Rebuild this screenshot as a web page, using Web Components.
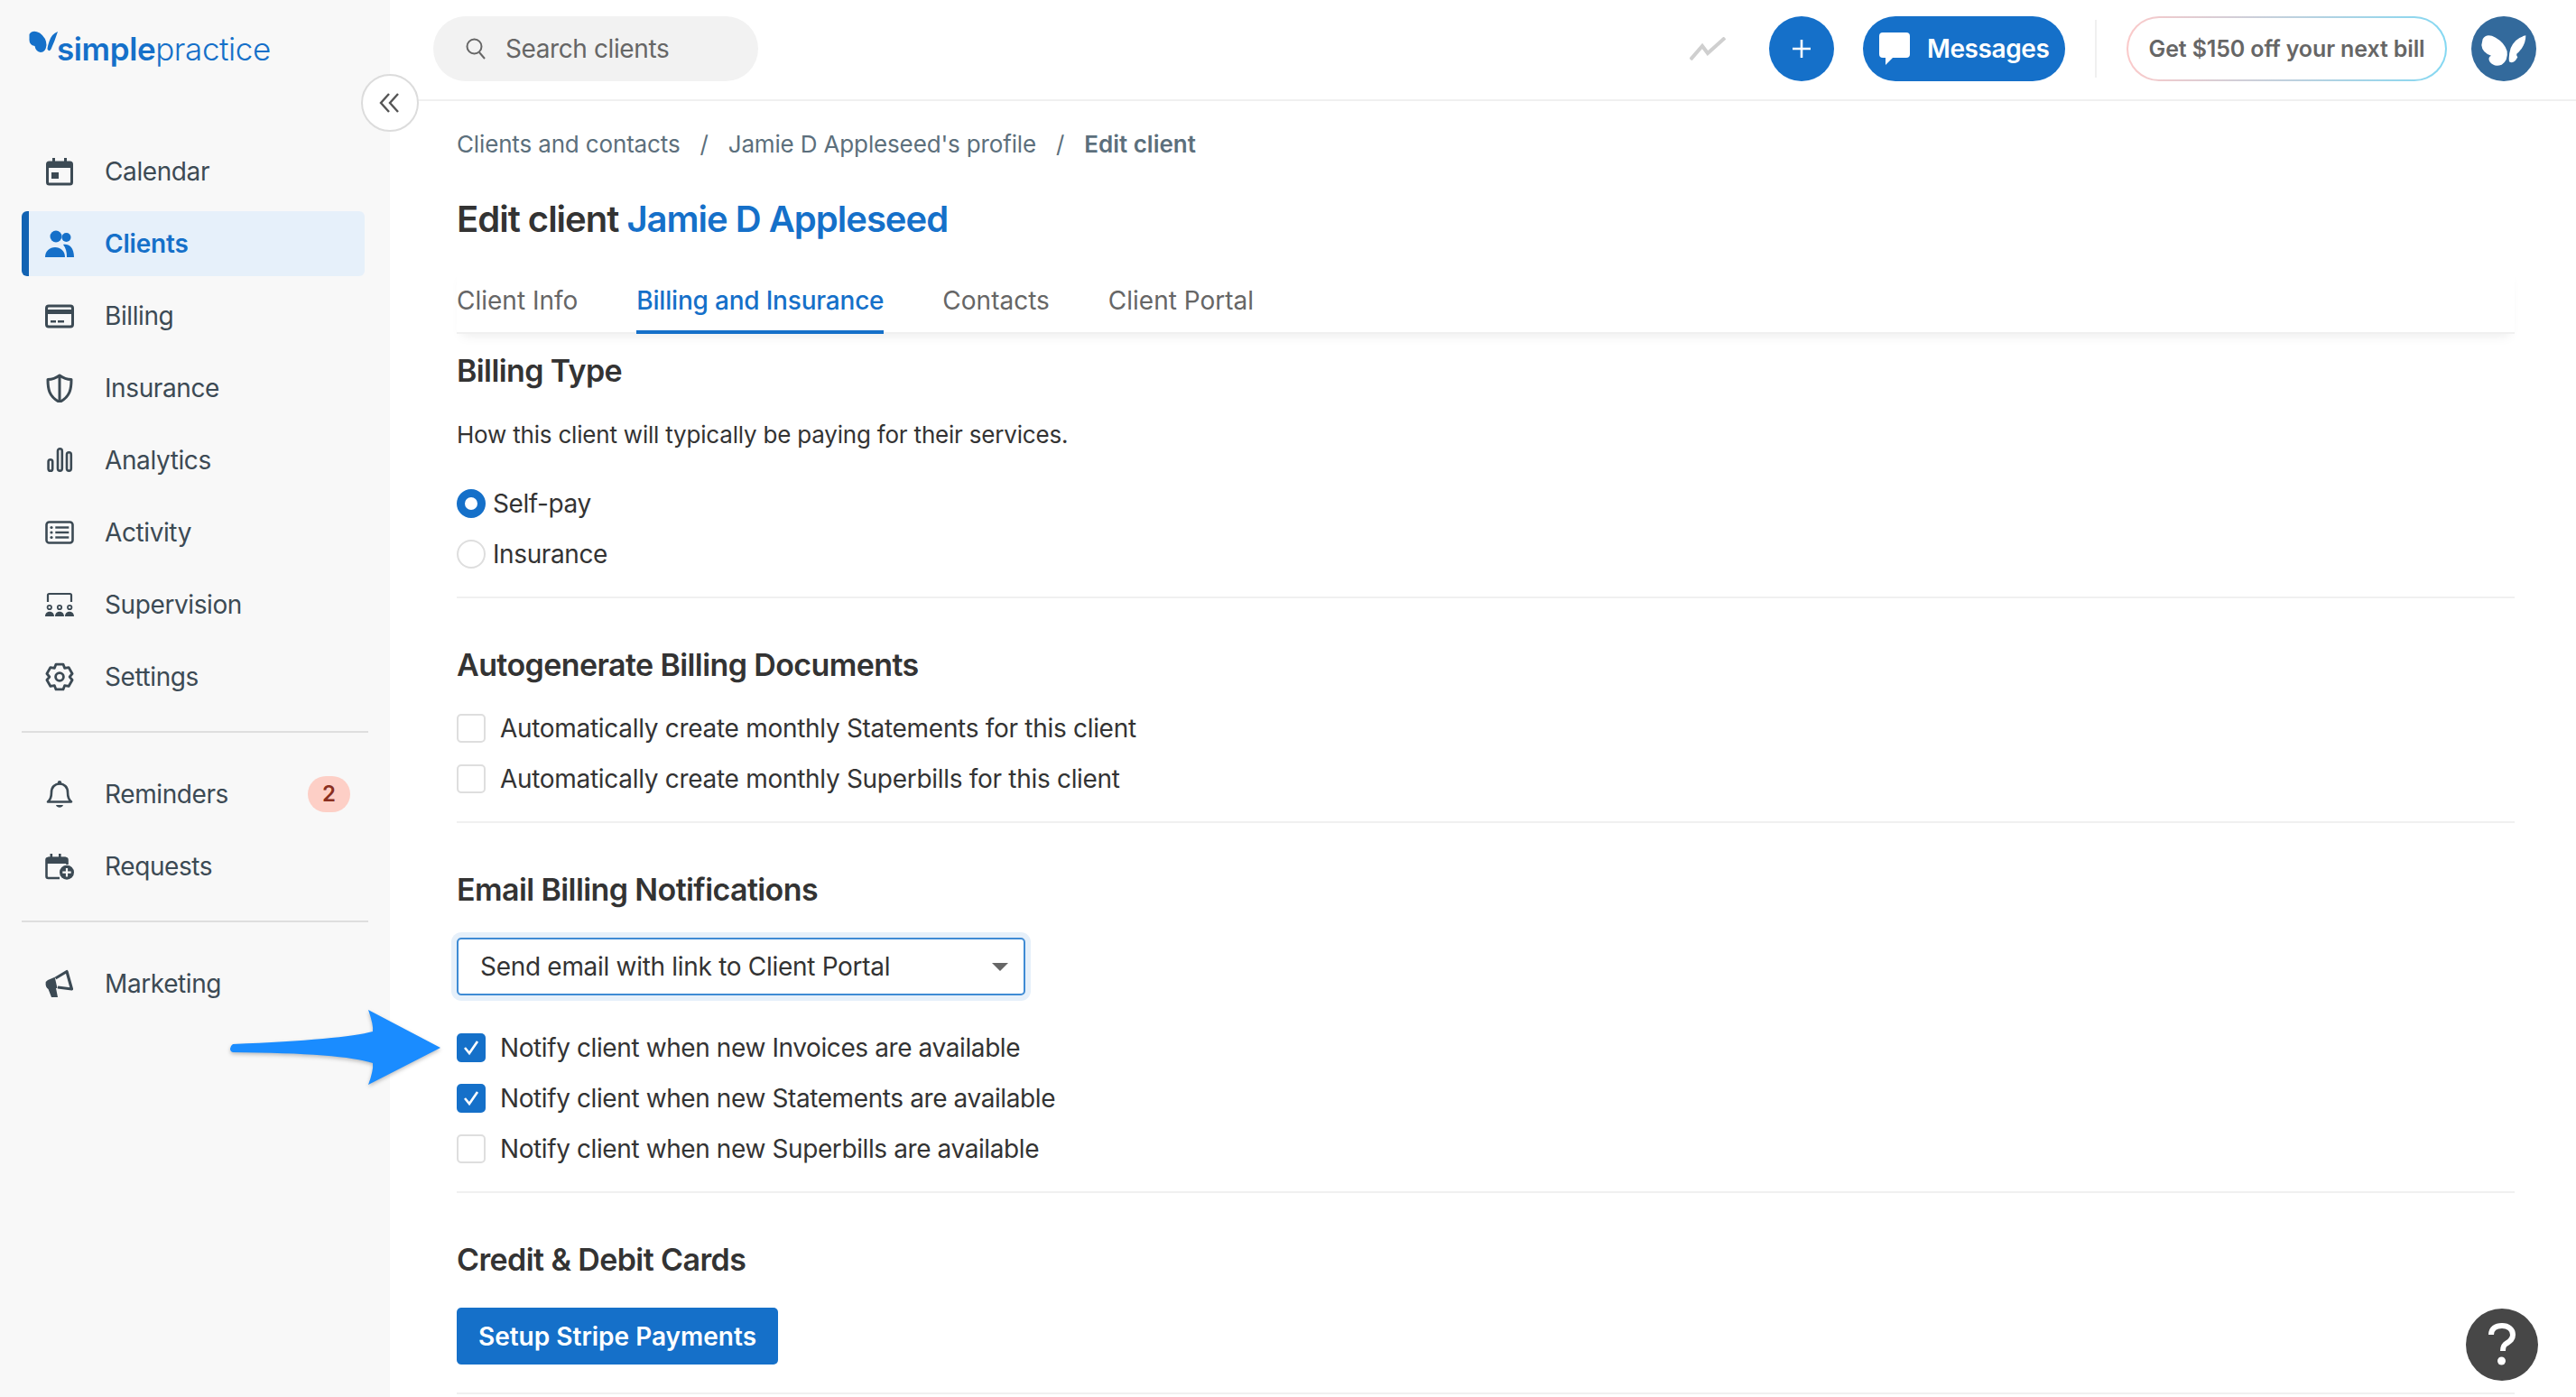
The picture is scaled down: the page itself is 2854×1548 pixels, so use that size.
<!DOCTYPE html>
<html lang="en">
<head>
<meta charset="utf-8">
<title>Edit client</title>
<style>
    html, body { margin: 0; height: 100%; overflow: hidden; background: #fff; }
    body { font-family: Inter, "Liberation Sans", sans-serif; color: #333; font-size: 28px; letter-spacing: -0.4px; }
    .lead { margin-top: 42px; }
    .desc { margin-top: 31px; line-height: 36px; font-size: 26px; letter-spacing: -0.2px; }
</style>
</head>
<body>
<sp-app>
    <sp-sidebar slot="sidebar">
        <sp-nav-item icon="calendar">Calendar</sp-nav-item>
        <sp-nav-item icon="clients" active>Clients</sp-nav-item>
        <sp-nav-item icon="billing">Billing</sp-nav-item>
        <sp-nav-item icon="insurance">Insurance</sp-nav-item>
        <sp-nav-item icon="analytics">Analytics</sp-nav-item>
        <sp-nav-item icon="activity">Activity</sp-nav-item>
        <sp-nav-item icon="supervision">Supervision</sp-nav-item>
        <sp-nav-item icon="settings">Settings</sp-nav-item>
        <sp-nav-rule></sp-nav-rule>
        <sp-nav-item icon="bell" badge="2">Reminders</sp-nav-item>
        <sp-nav-item icon="requests">Requests</sp-nav-item>
        <sp-nav-rule></sp-nav-rule>
        <sp-nav-item icon="marketing">Marketing</sp-nav-item>
    </sp-sidebar>
    <sp-topbar slot="topbar"></sp-topbar>

    <sp-breadcrumb>
        <a>Clients and contacts</a>
        <a>Jamie D Appleseed's profile</a>
        <a>Edit client</a>
    </sp-breadcrumb>
    <sp-title name="Jamie D Appleseed">Edit client</sp-title>
    <sp-tabs>
        <a>Client Info</a>
        <a active>Billing and Insurance</a>
        <a>Contacts</a>
        <a>Client Portal</a>
    </sp-tabs>

    <sp-section heading="Billing Type" first>
        <div class="desc">How this client will typically be paying for their services.</div>
        <sp-stack class="lead">
            <sp-radio checked>Self-pay</sp-radio>
            <sp-radio>Insurance</sp-radio>
        </sp-stack>
    </sp-section>

    <sp-section heading="Autogenerate Billing Documents">
        <sp-stack style="margin-top:32px; letter-spacing:-0.3px">
            <sp-check>Automatically create monthly Statements for this client</sp-check>
            <sp-check>Automatically create monthly Superbills for this client</sp-check>
        </sp-stack>
    </sp-section>

    <sp-section heading="Email Billing Notifications">
        <sp-select style="margin-top:31px; letter-spacing:-0.3px">Send email with link to Client Portal</sp-select>
        <sp-stack class="lead">
            <sp-check checked>Notify client when new Invoices are available</sp-check>
            <sp-check checked>Notify client when new Statements are available</sp-check>
            <sp-check>Notify client when new Superbills are available</sp-check>
        </sp-stack>
    </sp-section>

    <sp-section heading="Credit &amp; Debit Cards">
        <sp-button style="margin-top:31px">Setup Stripe Payments</sp-button>
    </sp-section>

    <sp-arrow slot="overlay"></sp-arrow>
    <sp-help slot="overlay"></sp-help>
</sp-app>

<script>
// six tooth cog outline, top tooth pointing up
function gearPath() {
    const pt = (deg, r) => {
        const a = deg * Math.PI / 180;
        return (16 + r * Math.cos(a)).toFixed(2) + ' ' + (16 + r * Math.sin(a)).toFixed(2);
    };
    let d = '';
    for (let i = 0; i < 6; i++) {
        const a = -90 + i * 60;
        d += (i ? 'L' : 'M') + pt(a - 16, 14.5) + 'L' + pt(a + 16, 14.5) + 'L' + pt(a + 30, 11.2);
    }
    return d + 'Z';
}

// nav icons, all drawn on a 32x32 box
const ICONS = {
    calendar: `<rect x="2.5" y="6" width="27" height="24" rx="2" fill="none" stroke="currentColor" stroke-width="3"/>
        <rect x="2.5" y="6" width="27" height="6" fill="currentColor"/>
        <rect x="8" y="1" width="3" height="6" fill="currentColor"/><rect x="21" y="1" width="3" height="6" fill="currentColor"/>
        <rect x="7" y="17" width="8" height="7" fill="currentColor"/>`,
    clients: `<circle cx="12" cy="8" r="6.5" fill="currentColor"/><circle cx="23.5" cy="9" r="5" fill="currentColor"/>
        <path d="M0 31c0-7 5-11 11-11s11 4 11 11z" fill="currentColor"/>
        <path d="M20 17c6-1 12 3 12 14h-8c0-6-1-10-4-14z" fill="currentColor"/>`,
    billing: `<rect x="1.5" y="5" width="29" height="23" rx="2.5" fill="none" stroke="currentColor" stroke-width="3"/>
        <rect x="2" y="9" width="28" height="5" fill="currentColor"/>
        <rect x="6" y="21" width="6" height="2.5" fill="currentColor"/><rect x="14" y="21" width="7" height="2.5" fill="currentColor"/>`,
    insurance: `<path d="M16 2C12 5 8 6.5 3 6.5c0 10 1 19 13 25 12-6 13-15 13-25C24 6.5 20 5 16 2z" fill="none" stroke="currentColor" stroke-width="3" stroke-linejoin="round"/>
        <rect x="14.5" y="3" width="3" height="27" fill="currentColor"/>`,
    analytics: `<g fill="none" stroke="currentColor" stroke-width="2.6"><rect x="3.6" y="15.3" width="4.6" height="12.4" rx="2.3"/>
        <rect x="14" y="3.3" width="4.8" height="24.4" rx="2.4"/>
        <rect x="24" y="7.3" width="4.8" height="20.4" rx="2.4"/></g>`,
    activity: `<rect x="1.5" y="4.5" width="29" height="23" rx="3" fill="none" stroke="currentColor" stroke-width="2.6"/>
        <g fill="currentColor"><circle cx="7" cy="10.5" r="1.6"/><circle cx="7" cy="16" r="1.6"/><circle cx="7" cy="21.5" r="1.6"/>
        <rect x="11.3" y="9.3" width="15" height="2.4"/><rect x="11.3" y="14.8" width="15" height="2.4"/><rect x="11.3" y="20.3" width="15" height="2.4"/></g>`,
    supervision: `<path d="M3 13V5.5Q3 4 4.5 4h23Q29 4 29 5.5V13" fill="none" stroke="currentColor" stroke-width="2.2"/>
        <g fill="none" stroke="currentColor" stroke-width="1.8"><circle cx="4.8" cy="19" r="2.2"/><circle cx="16" cy="19" r="2.2"/><circle cx="27.2" cy="19" r="2.2"/></g>
        <path d="M0 29c0-7 10-7 10 0zM11 29c0-7 10-7 10 0zM22 29c0-7 10-7 10 0z" fill="currentColor"/>`,
    settings: `<path d="${gearPath()}" fill="none" stroke="currentColor" stroke-width="2.8" stroke-linejoin="round"/>
        <circle cx="16" cy="16" r="4.4" fill="none" stroke="currentColor" stroke-width="2.8"/>`,
    bell: `<path d="M3 24.5c3-2.5 4-6 4-10.500 0-6 4-9.500 9-9.500s9 3.500 9 9.500c0 4.500 1 8 4 10.500z" fill="none" stroke="currentColor" stroke-width="2.6" stroke-linejoin="round"/>
        <circle cx="16" cy="3.2" r="2.2" fill="currentColor"/><path d="M12 28h8c-1 3.5-7 3.5-8 0z" fill="currentColor"/>`,
    requests: `<path d="M16 29H3.5Q1.5 29 1.5 27V9Q1.5 7 3.5 7h19Q24.5 7 24.5 9v5" fill="none" stroke="currentColor" stroke-width="2.6"/>
        <path d="M1.5 13V8Q1.5 5.5 4 5.5h18Q24.5 5.5 24.5 8v5z" fill="currentColor"/>
        <rect x="5.5" y="2" width="2.6" height="4" fill="currentColor"/><rect x="15" y="2" width="2.6" height="4" fill="currentColor"/>
        <circle cx="24" cy="22.7" r="8" fill="currentColor"/><path d="M24 18v9.4M19.3 22.7h9.4" stroke="#f8f8f8" stroke-width="2.2"/>`,
    marketing: `<path d="M.7 14Q0 20 3.5 22L7 31H14L12 21H13.5L10.7 8.7L3 12z" fill="currentColor"/>
        <path d="M11.5 10L24 2.5 29.5 22 14 20" fill="none" stroke="currentColor" stroke-width="3.2" stroke-linejoin="round"/>`
};

const BRAND = '#1570c9';

class SpApp extends HTMLElement {
    constructor() {
        super();
        this.attachShadow({ mode: 'open' });
        this.shadowRoot.innerHTML = `
            <style>
                :host { display: grid; grid-template-columns: 432px 1fr; width: 2854px; height: 1548px; position: relative; overflow: hidden; }
                .main { min-width: 0; }
                .content { padding: 30px 68px 0 74px; }
                .collapse {
                    position: absolute; left: 400px; top: 82px; width: 64px; height: 64px; box-sizing: border-box;
                    border: 2px solid #dcdcdc; border-radius: 50%; background: #fff;
                    display: flex; align-items: center; justify-content: center; color: #555;
                }
            </style>
            <slot name="sidebar"></slot>
            <div class="main">
                <slot name="topbar"></slot>
                <div class="content"><slot></slot></div>
            </div>
            <div class="collapse">
                <svg width="24" height="24" viewBox="0 0 24 24" fill="none" stroke="currentColor" stroke-width="2.4"><path d="M11 2L2 12l9 10M21 2l-9 10 9 10"/></svg>
            </div>
            <slot name="overlay"></slot>
        `;
    }
}

class SpSidebar extends HTMLElement {
    constructor() {
        super();
        this.attachShadow({ mode: 'open' });
        this.shadowRoot.innerHTML = `
            <style>
                :host { display: block; background: #f8f8f8; height: 1548px; box-sizing: border-box; padding: 0 24px; }
                .logo { display: flex; height: 150px; position: relative; }
                .logo svg { position: absolute; left: 8px; top: 34px; }
                .word { position: absolute; left: 39px; top: 32px; font-size: 35px; line-height: 44px; color: ${BRAND}; white-space: nowrap; letter-spacing: -0.4px; }
                .word b { font-weight: 600; }
                .word span { font-weight: 300; }
            </style>
            <div class="logo">
                <svg width="32" height="26" viewBox="32 34 32 26" fill="${BRAND}">
                    <path d="M32.5 38Q36 32.5 44 36.5Q51.5 42 51.5 50Q50.5 58 45 58Q39.5 57 38.500 51Q32 49.5 32.5 43Z"/>
                    <path d="M64 35Q57 37.500 54.500 46Q52.500 52 52.500 54.500Q54.500 58 56.500 54.500Q60.500 46 64 35Z"/>
                </svg>
                <div class="word"><b>simple</b><span>practice</span></div>
            </div>
            <slot></slot>
        `;
    }
}

class SpNavItem extends HTMLElement {
    constructor() {
        super();
        this.attachShadow({ mode: 'open' });
    }

    connectedCallback() {
        const badge = this.getAttribute('badge');
        this.shadowRoot.innerHTML = `
            <style>
                :host { display: block; height: 80px; padding: 4px 0; box-sizing: border-box; color: #3c4a54; width: 380px; }
                :host([active]) { color: ${BRAND}; font-weight: 600; letter-spacing: -0.2px; }
                .row { height: 72px; display: flex; align-items: center; border-radius: 6px; padding-left: 26px; padding-right: 16px; gap: 34px; font-size: 28px; line-height: 36px; }
                :host([active]) .row { background: #e6f0fa; border-left: 8px solid #1263b3; padding-left: 18px; }
                svg { flex: none; }
                .badge { margin-left: auto; width: 47px; height: 40px; border-radius: 20px; background: #fdcfc6; color: #8a2f20; font-size: 24px; font-weight: 600; letter-spacing: 0; display: flex; align-items: center; justify-content: center; }
            </style>
            <div class="row">
                <svg width="32" height="32" viewBox="0 0 32 32">${ICONS[this.getAttribute('icon')]}</svg>
                <span><slot></slot></span>
                ${badge ? `<span class="badge">${badge}</span>` : ''}
            </div>
        `;
    }
}

class SpNavRule extends HTMLElement {
    constructor() {
        super();
        this.attachShadow({ mode: 'open' });
        this.shadowRoot.innerHTML = `<style>:host { display: block; height: 2px; background: #dedede; margin: 20px 0 28px; width: 384px; }</style>`;
    }
}

class SpTopbar extends HTMLElement {
    constructor() {
        super();
        this.attachShadow({ mode: 'open' });
        this.shadowRoot.innerHTML = `
            <style>
                :host { display: flex; align-items: center; height: 112px; box-sizing: border-box; border-bottom: 2px solid #f0f0f0; padding: 0 44px 2px 48px; }
                .search { width: 360px; height: 72px; border-radius: 36px; background: #f2f2f2; display: flex; align-items: center; gap: 22px; padding-left: 36px; box-sizing: border-box; color: #666; }
                .right { margin-left: auto; display: flex; align-items: center; }
                .round { width: 72px; height: 72px; border-radius: 50%; display: flex; align-items: center; justify-content: center; }
                .plus { background: ${BRAND}; margin-left: 48px; }
                .msg { margin-left: 32px; width: 224px; height: 72px; border-radius: 36px; background: ${BRAND}; color: #fff; font-weight: 600; display: flex; align-items: center; padding-left: 18px; gap: 19px; box-sizing: border-box; }
                .sep { width: 2px; height: 64px; background: #f0f0f0; margin: 0 33px; }
                .promo { width: 355px; height: 72px; border-radius: 36px; border: 2px solid transparent; box-sizing: border-box; background: linear-gradient(#fff, #fff) padding-box, linear-gradient(90deg, #fbc9c9, #84d8f2) border-box; color: #666; font-size: 25px; font-weight: 600; letter-spacing: -0.13px; display: flex; align-items: center; justify-content: center; white-space: nowrap; }
                .avatar { background: #336a9c; margin-left: 27px; }
            </style>
            <div class="search">
                <svg width="22" height="24" viewBox="0 0 22 24" fill="none" stroke="#666" stroke-width="2"><circle cx="9.5" cy="9.5" r="8"/><path d="M15 16l6 7"/></svg>
                <span>Search clients</span>
            </div>
            <div class="right">
                <svg width="40" height="26" viewBox="0 0 40 26" fill="none" stroke="#cfcfcf" stroke-width="4"><path d="M1 25l13-15 6 8L39 1"/></svg>
                <div class="round plus"><svg width="24" height="24" viewBox="0 0 24 24" stroke="#fff" stroke-width="2.6"><path d="M12 2v20M2 12h20"/></svg></div>
                <div class="msg">
                    <svg width="34" height="36" viewBox="0 0 34 36" fill="#fff"><path d="M4 0h26q4 0 4 4v20q0 4-4 4H15L7 36v-8H4q-4 0-4-4V4q0-4 4-4z"/></svg>
                    <span>Messages</span>
                </div>
                <div class="sep"></div>
                <div class="promo">Get $150 off your next bill</div>
                <div class="round avatar">
                    <svg width="72" height="72" viewBox="24 24 216 216" fill="#fff">
                        <path d="M62 100Q75 78 105 95Q135 112 143 140Q147 170 125 185Q100 195 85 175Q78 160 90 155Q60 145 58 120Z"/>
                        <path d="M205 88Q170 95 155 130Q147 155 150 175Q165 185 178 160Q170 150 180 145Q205 120 205 88Z"/>
                    </svg>
                </div>
            </div>
        `;
    }
}

class SpBreadcrumb extends HTMLElement {
    constructor() {
        super();
        this.attachShadow({ mode: 'open' });
        this.shadowRoot.innerHTML = `
            <style>
                :host { display: block; line-height: 36px; font-size: 26px; letter-spacing: -0.15px; color: #5c6f7c; white-space: nowrap; }
                span { margin: 0 22px; }
                b { font-weight: 600; letter-spacing: 0; }
            </style>
        `;
    }

    connectedCallback() {
        const parts = [...this.querySelectorAll('a')].map(a => a.textContent);
        const last = parts.pop();
        this.shadowRoot.innerHTML += parts.map(p => `${p}<span>/</span>`).join('') + `<b>${last}</b>`;
    }
}

class SpTitle extends HTMLElement {
    constructor() {
        super();
        this.attachShadow({ mode: 'open' });
    }

    connectedCallback() {
        this.shadowRoot.innerHTML = `
            <style>
                :host { display: block; margin-top: 39px; font-size: 40px; line-height: 52px; font-weight: 600; color: #333; letter-spacing: -1px; }
                span { color: ${BRAND}; }
            </style>
            <slot></slot> <span>${this.getAttribute('name')}</span>
        `;
    }
}

class SpTabs extends HTMLElement {
    constructor() {
        super();
        this.attachShadow({ mode: 'open' });
    }

    connectedCallback() {
        const tabs = [...this.querySelectorAll('a')].map(a =>
            `<div class="tab${a.hasAttribute('active') ? ' on' : ''}">${a.textContent}</div>`).join('');
        this.shadowRoot.innerHTML = `
            <style>
                :host { display: flex; gap: 65px; margin-top: 27px; height: 74px; border-bottom: 2px solid #f0f0f0; box-sizing: border-box; box-shadow: 0 8px 12px -6px rgba(0,0,0,.08); position: relative; letter-spacing: 0; }
                .tab { line-height: 74px; height: 74px; font-size: 28px; color: #666; white-space: nowrap; }
                .on { color: ${BRAND}; font-weight: 500; letter-spacing: -0.2px; box-shadow: inset 0 -4px 0 ${BRAND}; }
            </style>
            ${tabs}
        `;
    }
}

class SpSection extends HTMLElement {
    constructor() {
        super();
        this.attachShadow({ mode: 'open' });
    }

    connectedCallback() {
        this.shadowRoot.innerHTML = `
            <style>
                :host { display: block; padding: 52px 0 31px; border-bottom: 2px solid #f0f0f0; }
                :host([first]) { padding-top: 19px; }
                h2 { margin: 0; font-size: 34px; line-height: 44px; font-weight: 600; color: #333; letter-spacing: -0.6px; }
            </style>
            <h2>${this.getAttribute('heading').replace('&', '&amp;')}</h2>
            <slot></slot>
        `;
    }
}

class SpStack extends HTMLElement {
    constructor() {
        super();
        this.attachShadow({ mode: 'open' });
        this.shadowRoot.innerHTML = `<style>:host { display: flex; flex-direction: column; gap: 24px; }</style><slot></slot>`;
    }
}

class SpRadio extends HTMLElement {
    constructor() {
        super();
        this.attachShadow({ mode: 'open' });
        this.shadowRoot.innerHTML = `
            <style>
                :host { display: flex; align-items: center; height: 32px; gap: 8px; font-size: 28px; color: #333; }
                i { width: 32px; height: 32px; box-sizing: border-box; border-radius: 50%; border: 2px solid #dedede; background: #fff; }
                :host([checked]) i { border: 9px solid ${BRAND}; }
            </style>
            <i></i><span><slot></slot></span>
        `;
    }
}

class SpCheck extends HTMLElement {
    constructor() {
        super();
        this.attachShadow({ mode: 'open' });
    }

    connectedCallback() {
        const checked = this.hasAttribute('checked');
        this.shadowRoot.innerHTML = `
            <style>
                :host { display: flex; align-items: center; height: 32px; gap: 16px; font-size: 28px; color: #333; }
                i { width: 32px; height: 32px; box-sizing: border-box; border-radius: 5px; border: 2px solid #dedede; background: #fff; display: flex; align-items: center; justify-content: center; }
                :host([checked]) i { border: 0; background: ${BRAND}; }
            </style>
            <i>${checked ? '<svg width="20" height="18" viewBox="0 0 20 18" fill="none" stroke="#fff" stroke-width="2.6"><path d="M3 9l5 6L17 2"/></svg>' : ''}</i>
            <span><slot></slot></span>
        `;
    }
}

class SpSelect extends HTMLElement {
    constructor() {
        super();
        this.attachShadow({ mode: 'open' });
        this.shadowRoot.innerHTML = `
            <style>
                :host { display: flex; align-items: center; width: 630px; height: 64px; box-sizing: border-box; border: 2px solid #3f8bd4; border-radius: 5px; box-shadow: 0 0 0 6px #e6f0fa; padding: 0 17px 0 24px; font-size: 28px; color: #333; background: #fff; }
                span { flex: 1; }
                svg { flex: none; }
            </style>
            <span><slot></slot></span>
            <svg width="18" height="9" viewBox="0 0 18 9" fill="#666"><path d="M0 0h18L9 9z"/></svg>
        `;
    }
}

class SpButton extends HTMLElement {
    constructor() {
        super();
        this.attachShadow({ mode: 'open' });
        this.shadowRoot.innerHTML = `
            <style>
                :host { display: flex; align-items: center; justify-content: center; width: 356px; height: 63px; border-radius: 5px; background: ${BRAND}; color: #fff; font-size: 28px; font-weight: 600; letter-spacing: 0; }
            </style>
            <slot></slot>
        `;
    }
}

class SpArrow extends HTMLElement {
    constructor() {
        super();
        this.attachShadow({ mode: 'open' });
        this.shadowRoot.innerHTML = `
            <style>
                :host { position: absolute; left: 250px; top: 1115px; width: 245px; height: 92px; }
                svg { display: block; filter: drop-shadow(0 2px 2px rgba(0,0,0,.25)); }
            </style>
            <svg width="245" height="92" viewBox="250 1115 245 92" fill="#1a8cff">
                <path d="M488 1161L408 1119Q414 1136 413 1143Q380 1152 258 1157Q255 1159 255 1162Q255 1165 258 1166Q380 1167 413 1178Q414 1186 408 1202Z"/>
            </svg>
        `;
    }
}

class SpHelp extends HTMLElement {
    constructor() {
        super();
        this.attachShadow({ mode: 'open' });
        this.shadowRoot.innerHTML = `
            <style>
                :host { position: absolute; left: 2732px; top: 1450px; width: 80px; height: 80px; border-radius: 50%; background: #474747; display: flex; align-items: center; justify-content: center; }
            </style>
            <svg width="30" height="48" viewBox="0 0 30 48" fill="none" stroke="#fff" stroke-width="6">
                <path d="M3 13C3 6 8 3 15 3s12 4 12 10c0 5-3 7-6 9-4 2-5 4-5 9"/>
                <circle cx="14.5" cy="42" r="4.5" fill="#fff" stroke="none"/>
            </svg>
        `;
    }
}

customElements.define('sp-app', SpApp);
customElements.define('sp-sidebar', SpSidebar);
customElements.define('sp-nav-item', SpNavItem);
customElements.define('sp-nav-rule', SpNavRule);
customElements.define('sp-topbar', SpTopbar);
customElements.define('sp-breadcrumb', SpBreadcrumb);
customElements.define('sp-title', SpTitle);
customElements.define('sp-tabs', SpTabs);
customElements.define('sp-section', SpSection);
customElements.define('sp-stack', SpStack);
customElements.define('sp-radio', SpRadio);
customElements.define('sp-check', SpCheck);
customElements.define('sp-select', SpSelect);
customElements.define('sp-button', SpButton);
customElements.define('sp-arrow', SpArrow);
customElements.define('sp-help', SpHelp);
</script>
</body>
</html>
